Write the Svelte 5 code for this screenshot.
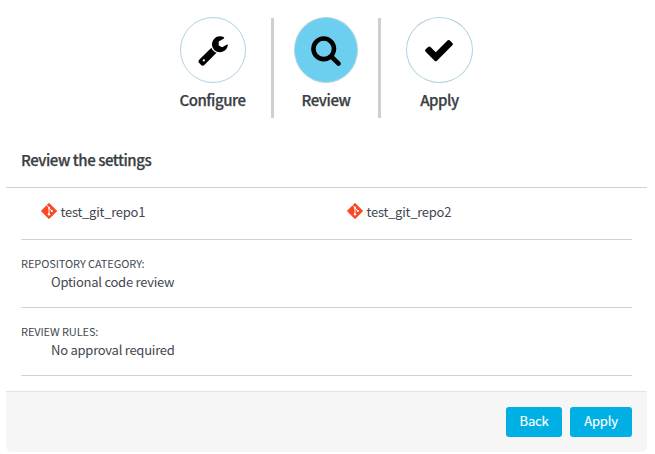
<script>
  const steps = [
    { id: 'configure', label: 'Configure', path: 'M448 1472q0-26-19-45t-45-19-45 19-19 45 19 45 45 19 45-19 19-45zm644-420l-682 682q-37 37-90 37-52 0-91-37l-106-108q-38-36-38-90 0-53 38-91l681-681q39 98 114.5 173.5t173.5 114.5zm634-435q0 39-23 106-47 134-164.5 217.5t-258.5 83.5q-185 0-316.5-131.5t-131.5-316.5 131.5-316.5 316.5-131.5q58 0 121.5 16.5t107.5 46.5q16 11 16 28t-16 28l-293 169v224l193 107q5-3 79-48.5t135.5-81 70.5-35.5q15 0 23.5 10t8.5 25z' },
    { id: 'review', label: 'Review', path: 'M1216 832q0-185-131.5-316.5t-316.5-131.5-316.5 131.5-131.5 316.5 131.5 316.5 316.5 131.5 316.5-131.5 131.5-316.5zm512 832q0 52-38 90t-90 38q-54 0-90-38l-343-342q-179 124-399 124-143 0-273.5-55.5t-225-150-150-225-55.5-273.5 55.5-273.5 150-225 225-150 273.5-55.5 273.5 55.5 225 150 150 225 55.5 273.5q0 220-124 399l343 343q37 37 37 90z' },
    { id: 'apply', label: 'Apply', path: 'M1671 566q0 40-28 68l-724 724-136 136q-28 28-68 28t-68-28l-136-136-362-362q-28-28-28-68t28-68l136-136q28-28 68-28t68 28l294 295 656-657q28-28 68-28t68 28l136 136q28 28 28 68z' },
  ];
  const repos = ['test_git_repo1', 'test_git_repo2'];
  const settings = [
    { name: 'REPOSITORY CATEGORY:', value: 'Optional code review' },
    { name: 'REVIEW RULES:', value: 'No approval required' },
  ];
</script>

<main>
  <nav>
    {#each steps as step}
      <div class="step {step.id}">
        <div class="circle">
          <svg width="32" height="32" viewBox="0 0 1792 1792"><path d={step.path} /></svg>
        </div>
        <span>{step.label}</span>
      </div>
    {/each}
  </nav>

  <h2>Review the settings</h2>

  <div class="body">
    <div class="repos">
      {#each repos as repo}
        <div class="repo">
          <svg width="16" height="16" viewBox="0 0 16 16">
            <path d="M8 .3 15.7 8 8 15.7.3 8Z" fill="#fc4622" stroke="#fc4622" stroke-width=".8" stroke-linejoin="round" />
            <path d="M5.8 2.3 8 4.6V11.4M8 5l2.7 2.8" fill="none" stroke="#fff" stroke-width="1" />
            <circle cx="8" cy="4.8" r="1.1" fill="#fff" />
            <circle cx="8" cy="11.3" r="1.2" fill="#fff" />
            <circle cx="10.8" cy="7.9" r="1.1" fill="#fff" />
          </svg>
          <span>{repo}</span>
        </div>
      {/each}
    </div>
    {#each settings as s}
      <div class="setting">
        <div class="name">{s.name}</div>
        <div class="value">{s.value}</div>
      </div>
    {/each}
  </div>

  <footer>
    <button class="back">Back</button>
    <button class="go">Apply</button>
  </footer>
</main>

<style>
  :global(body) { background: #fff; }
  main {
    box-sizing: border-box;
    width: 655px;
    height: 454px;
    padding: 17px 8px 2px 6px;
    overflow: hidden;
    font-family: "Noto Sans CJK SC", "Noto Sans", sans-serif;
    color: #3f4850;
    display: flex;
    flex-direction: column;
  }
  nav { display: flex; height: 101px; padding-left: 173px; }
  .step {
    box-sizing: border-box;
    display: flex;
    flex-direction: column;
    align-items: center;
    white-space: nowrap;
  }
  .configure { width: 92px; padding-right: 25px; }
  .review {
    width: 110px;
    border: solid #cfcfcf;
    border-width: 0 3px;
    height: 100px;
    margin-top: 1px;
  }
  .apply { width: 117px; }
  .circle {
    box-sizing: border-box;
    width: 66px;
    height: 66px;
    border: 1px solid #b0d3df;
    border-radius: 50%;
    display: flex;
    align-items: center;
    justify-content: center;
  }
  .review .circle { width: 64px; margin-top: -1px; background: #6dcfef; }
  .apply .circle { width: 67px; }
  .apply svg { margin-right: 2px; }
  .step span, h2 {
    color: #3a4043;
    font-size: 15px;
    line-height: 24px;
    font-weight: 500;
    letter-spacing: -.45px;
    -webkit-text-stroke: .25px #3a4043;
  }
  .step span { margin-top: 5px; }
  h2 {
    box-sizing: border-box;
    margin: 0;
    height: 70px;
    padding: 30px 0 0 15px;
    border-bottom: 1px solid #c8d3dc;
  }
  .body { height: 203px; padding: 0 15px; }
  .repos, .setting { box-sizing: border-box; border-bottom: 1px solid #c8d5db; }
  .repos { display: flex; height: 52px; padding: 15px 0 0 20px; }
  .repo {
    display: flex;
    flex: 0 0 306px;
    font-size: 13px;
    line-height: 18px;
    letter-spacing: -.25px;
  }
  .repo svg { margin-right: 3.5px; }
  .setting { height: 68px; padding-top: 14px; }
  .name { font-size: 11px; line-height: 19px; letter-spacing: -.1px; }
  .value { font-size: 13px; line-height: 18px; padding-left: 30px; letter-spacing: -.25px; }
  footer {
    box-sizing: border-box;
    height: 61px;
    background: #f6f6f6;
    border-top: 1px solid #e2e5e5;
    border-radius: 0 0 6px 6px;
    padding: 15px 15px 0 0;
    display: flex;
    justify-content: flex-end;
    gap: 8px;
  }
  button {
    height: 30px;
    border: 0;
    padding: 0 0 2px;
    border-radius: 3px;
    background: #00afe3;
    color: #fff;
    font-family: inherit;
    font-size: 13px;
    line-height: 28px;
    letter-spacing: -.2px;
    -webkit-text-stroke: .15px #fff;
  }
  .back { width: 56px; }
  .go { width: 62px; }
</style>
